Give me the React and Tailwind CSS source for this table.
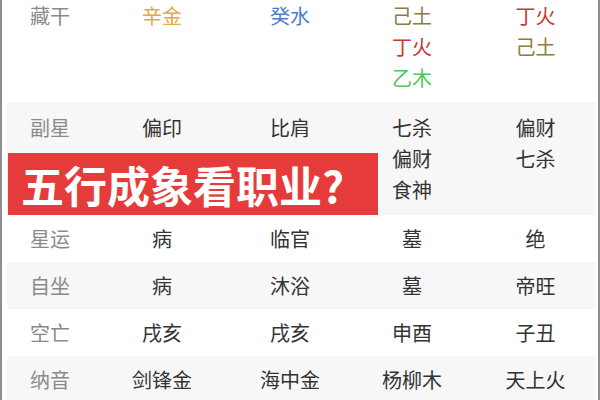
import React from "react";

const font = { fontFamily: '"Noto Sans CJK SC", "Noto Sans", sans-serif' };

const C = {
  gold: "text-[#e2a94a]",
  blue: "text-[#4a7ec4]",
  olive: "text-[#8d7d3c]",
  red: "text-[#c93a35]",
  green: "text-[#55c463]",
  dark: "text-[#333333]",
};

function Cell({ items }) {
  return (
    <div className="flex flex-col items-center">
      {items.map(([t, c], i) => (
        <div key={i} className={`leading-[31px] ${c}`}>
          {t}
        </div>
      ))}
    </div>
  );
}

function Row({ label, cols, gray, pad }) {
  return (
    <div
      className={`grid grid-cols-[86px_138px_118px_126px_1fr] text-[20px] ${pad} ${
        gray ? "bg-[#f7f7f7]" : "bg-white"
      }`}
    >
      <div className="flex justify-center">
        <div className="leading-[31px] text-[#8a8a8a]">{label}</div>
      </div>
      {cols.map((c, i) => (
        <Cell key={i} items={c} />
      ))}
    </div>
  );
}

export default function App() {
  const d = C.dark;
  return (
    <div
      style={font}
      className="relative w-[600px] h-[400px] overflow-hidden bg-white border-l-2 border-r-2 border-[#8e8e8e]"
    >
      <div className="ml-[5px] mr-[2px] flex flex-col">
        <Row
          label="藏干"
          pad="pt-0 pb-[9px]"
          cols={[
            [["辛金", C.gold]],
            [["癸水", C.blue]],
            [
              ["己土", C.olive],
              ["丁火", C.red],
              ["乙木", C.green],
            ],
            [
              ["丁火", C.red],
              ["己土", C.olive],
            ],
          ]}
        />
        <Row
          label="副星"
          gray
          pad="py-[10px]"
          cols={[
            [["偏印", d]],
            [["比肩", d]],
            [
              ["七杀", d],
              ["偏财", d],
              ["食神", d],
            ],
            [
              ["偏财", d],
              ["七杀", d],
            ],
          ]}
        />
        <Row
          label="星运"
          pad="py-[8px]"
          cols={[[["病", d]], [["临官", d]], [["墓", d]], [["绝", d]]]}
        />
        <Row
          label="自坐"
          gray
          pad="py-[8px]"
          cols={[[["病", d]], [["沐浴", d]], [["墓", d]], [["帝旺", d]]]}
        />
        <Row
          label="空亡"
          pad="py-[8px]"
          cols={[[["戌亥", d]], [["戌亥", d]], [["申酉", d]], [["子丑", d]]]}
        />
        <Row
          label="纳音"
          gray
          pad="py-[8px]"
          cols={[[["剑锋金", d]], [["海中金", d]], [["杨柳木", d]], [["天上火", d]]]}
        />
      </div>
      <div className="absolute left-[6px] top-[153px] w-[370px] h-[62px] bg-[#e63b3b] flex items-center pl-[13px]">
        <span className="text-white text-[43px] font-bold leading-none">
          五行成象看职业?
        </span>
      </div>
    </div>
  );
}
